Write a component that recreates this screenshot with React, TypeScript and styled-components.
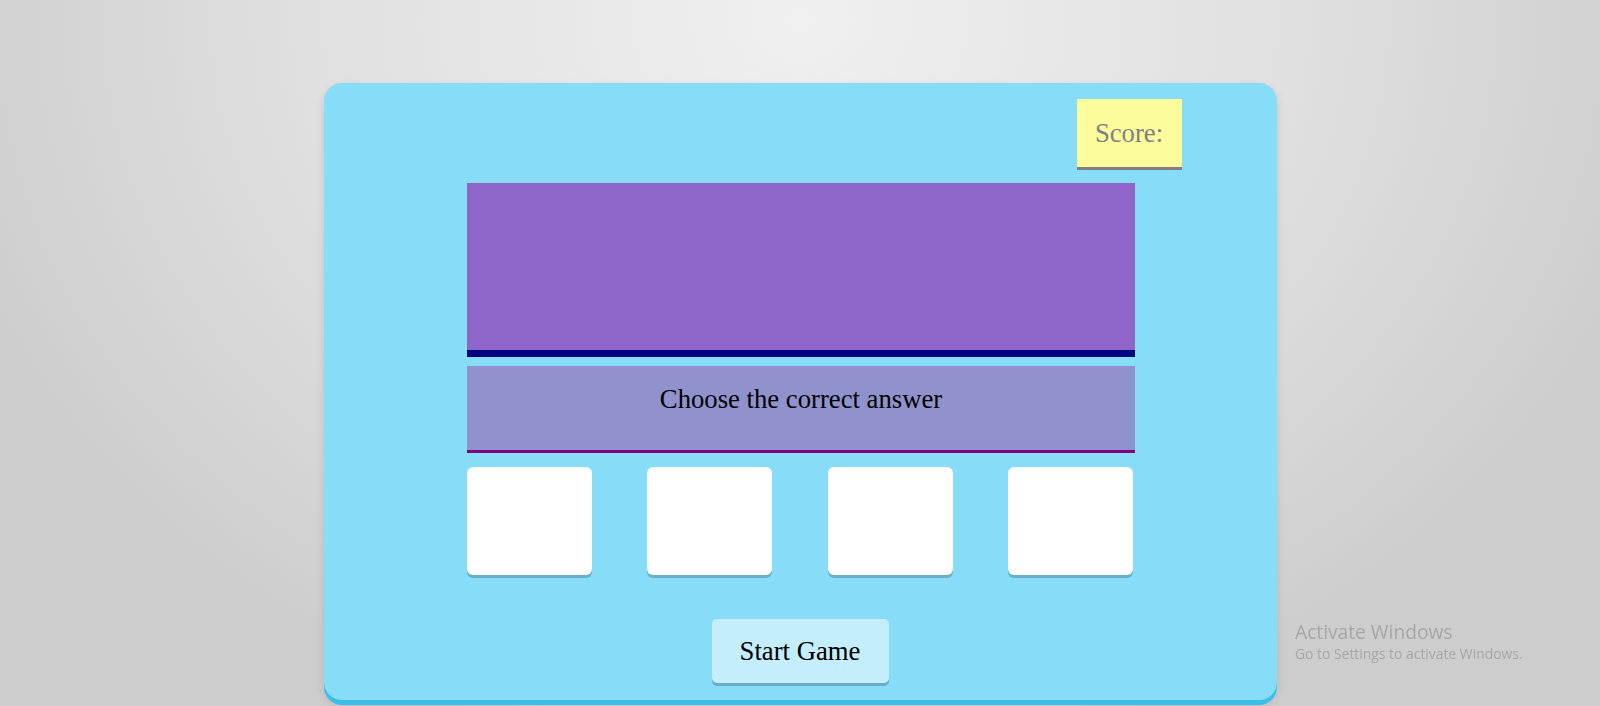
import React from "react";
import styled, { createGlobalStyle } from "styled-components";

const GlobalStyle = createGlobalStyle`
  html, body {
    margin: 0;
    padding: 0;
    height: 100%;
  }
  body {
    min-height: 706px;
    background: radial-gradient(ellipse 900px 750px at 800px 20px, #f0f0f0 0%, #e0e0e0 55%, #cdcdcd 100%);
    background-attachment: fixed;
    font-family: "Liberation Serif", "Times New Roman", serif;
    overflow: hidden;
  }
`;

const Page = styled.div`
  display: flex;
  justify-content: center;
  padding-top: 83px;
`;

const Board = styled.div`
  box-sizing: border-box;
  width: 953px;
  height: 617px;
  background: #87dcf7;
  border-radius: 18px;
  box-shadow: 0 5px 0 #3bbfe8, 0 4px 10px rgba(0, 0, 0, 0.12);
  padding: 16px 0 17px;
  display: flex;
  flex-direction: column;
  align-items: center;
`;

const ScoreRow = styled.div`
  align-self: stretch;
  display: flex;
  justify-content: flex-end;
  padding-right: 95px;
`;

const ScoreBox = styled.div`
  width: 105px;
  height: 68px;
  background: #fcfc9d;
  border-bottom: 3px solid #808080;
  display: flex;
  align-items: center;
  justify-content: center;
  font-size: 26.7px;
  color: #808080;
`;

const Display = styled.div`
  margin-top: 13px;
  width: 668px;
  height: 167px;
  background: #9065c9;
  border-bottom: 7px solid #000080;
  position: relative;
  left: 1px;
`;

const Prompt = styled.div`
  box-sizing: border-box;
  margin-top: 9px;
  width: 668px;
  height: 87px;
  background: #8f92cc;
  border-bottom: 3px solid #800080;
  padding-top: 18px;
  text-align: center;
  font-size: 26.7px;
  line-height: 30px;
  color: #000;
  position: relative;
  left: 1px;
`;

const Choices = styled.div`
  margin-top: 14px;
  width: 666px;
  display: flex;
  justify-content: space-between;
`;

const Choice = styled.div`
  width: 125px;
  height: 108px;
  background: #ffffff;
  border-radius: 6px;
  box-shadow: 0 3px 0 #68afc8;
`;

const StartButton = styled.button`
  margin-top: 44px;
  width: 177px;
  height: 64px;
  border: none;
  border-radius: 5px;
  background: #c4eefc;
  box-shadow: 0 3px 0 #6aaec4;
  font-family: "Liberation Serif", "Times New Roman", serif;
  font-size: 26.7px;
  color: #000;
  cursor: pointer;
  padding: 0;
`;

const Watermark = styled.div`
  position: fixed;
  left: 1295px;
  top: 620px;
  font-family: "Open Sans", "Noto Sans", sans-serif;
  color: rgba(120, 120, 120, 0.45);
  pointer-events: none;
`;

const WatermarkTitle = styled.div`
  font-size: 19.2px;
  line-height: 24px;
`;

const WatermarkSub = styled.div`
  font-size: 13.9px;
  line-height: 20px;
`;

export default function App() {
  return (
    <>
      <GlobalStyle />
      <Page>
        <Board>
          <ScoreRow>
            <ScoreBox>Score:</ScoreBox>
          </ScoreRow>
          <Display />
          <Prompt>Choose the correct answer</Prompt>
          <Choices>
            <Choice />
            <Choice />
            <Choice />
            <Choice />
          </Choices>
          <StartButton>Start Game</StartButton>
        </Board>
      </Page>
      <Watermark>
        <WatermarkTitle>Activate Windows</WatermarkTitle>
        <WatermarkSub>Go to Settings to activate Windows.</WatermarkSub>
      </Watermark>
    </>
  );
}
